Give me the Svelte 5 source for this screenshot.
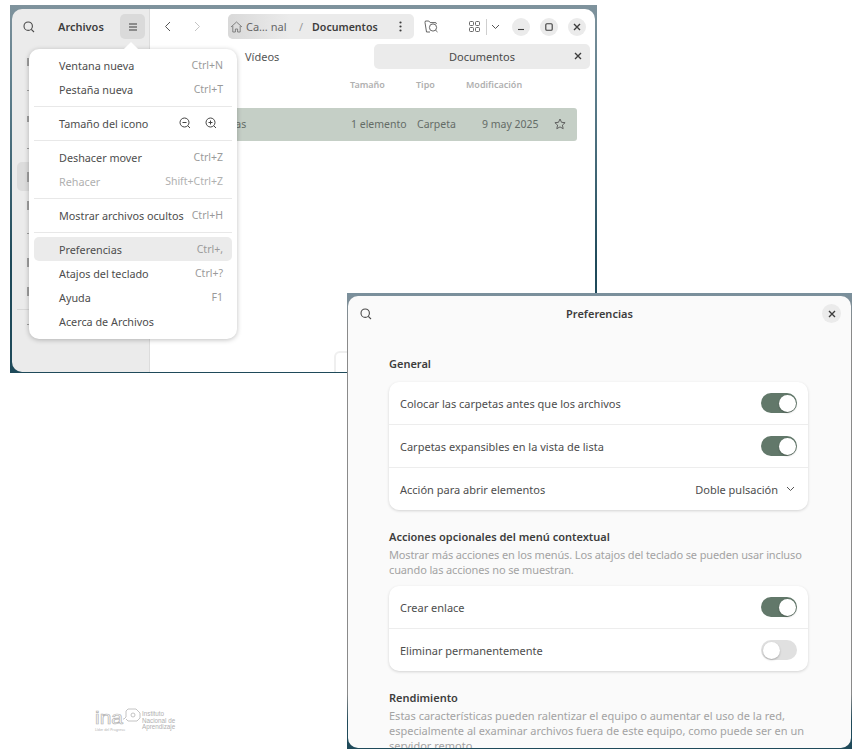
<script>
  const menu = [
    [
      { label: 'Ventana nueva', key: 'Ctrl+N' },
      { label: 'Pestaña nueva', key: 'Ctrl+T' }
    ],
    [{ label: 'Tamaño del icono', zoom: true }],
    [
      { label: 'Deshacer mover', key: 'Ctrl+Z' },
      { label: 'Rehacer', key: 'Shift+Ctrl+Z', off: true }
    ],
    [{ label: 'Mostrar archivos ocultos', key: 'Ctrl+H' }],
    [
      { label: 'Preferencias', key: 'Ctrl+,', hover: true },
      { label: 'Atajos del teclado', key: 'Ctrl+?' },
      { label: 'Ayuda', key: 'F1' },
      { label: 'Acerca de Archivos' }
    ]
  ]

  const general = [
    { label: 'Colocar las carpetas antes que los archivos', on: true },
    { label: 'Carpetas expansibles en la vista de lista', on: true },
    { label: 'Acción para abrir elementos', value: 'Doble pulsación' }
  ]

  const context = [
    { label: 'Crear enlace', on: true },
    { label: 'Eliminar permanentemente', on: false }
  ]

  // sidebar icons only peek out a couple of pixels from under the menu
  const places = [8, 1, 6, 1, 10, 9, 1, 9, 9]
</script>

{#snippet search()}
  <svg width="12" height="12" viewBox="0 0 12 12" fill="none" stroke="#4a4a4a" stroke-width="1.1">
    <circle cx="5.2" cy="5.2" r="4.2" />
    <path d="M8.3 8.3 11 11" />
  </svg>
{/snippet}

{#snippet cross()}
  <svg width="8" height="8" viewBox="0 0 8 8" fill="none" stroke="#3d3d3d" stroke-width="1.4">
    <path d="M1 1 7 7M7 1 1 7" />
  </svg>
{/snippet}

{#snippet rows(list, cls)}
  <div class="card {cls}">
    {#each list as row}
      <div class="card-row">
        <span>{row.label}</span>
        {#if row.value}
          <span class="value">
            {row.value}
            <svg width="9" height="6" viewBox="0 0 9 6" fill="none" stroke="#555" stroke-width="1">
              <path d="M1 1 4.5 4.5 8 1" />
            </svg>
          </span>
        {:else}
          <span class="switch" class:on={row.on}><i></i></span>
        {/if}
      </div>
    {/each}
  </div>
{/snippet}

<div class="desktop">
  <section class="win files">
    <aside class="sidebar">
      <div class="side-head">
        <span class="side-search">{@render search()}</span>
        <strong>Archivos</strong>
        <span class="burger">
          <svg width="10" height="8" viewBox="0 0 10 8" fill="none" stroke="#3d3d3d" stroke-width="1.2">
            <path d="M1 1h8M1 4h8M1 7h8" />
          </svg>
        </span>
      </div>
      <div class="places">
        {#each places as h, i}
          <div class="place" class:active={i === 4}>
            <span class="place-icon" style="height: {h}px"></span>
          </div>
        {/each}
        <hr />
        <div class="place"><span class="place-icon" style="height: 1px"></span></div>
      </div>
    </aside>

    <div class="content">
      <header class="toolbar">
        <svg class="nav" width="7" height="11" viewBox="0 0 7 11" fill="none" stroke="#555" stroke-width="1">
          <path d="M6 1 1.5 5.5 6 10" />
        </svg>
        <svg class="nav next" width="7" height="11" viewBox="0 0 7 11" fill="none" stroke="#c4c4c4" stroke-width="1">
          <path d="M1 1 5.5 5.5 1 10" />
        </svg>
        <div class="path">
          <span class="crumb-home">
            <svg width="13" height="12" viewBox="0 0 13 12" fill="none" stroke="#777" stroke-width="0.9">
              <path d="M1 6 6.5 1 12 6M2.8 5v6h2.6V8h2.2v3h2.6V5" />
            </svg>
            Ca… nal
          </span>
          <span class="slash">/</span>
          <strong>Documentos</strong>
          <svg class="dots" width="3" height="11" viewBox="0 0 3 11" fill="#3d3d3d">
            <circle cx="1.5" cy="1.5" r="1.1" />
            <circle cx="1.5" cy="5.5" r="1.1" />
            <circle cx="1.5" cy="9.5" r="1.1" />
          </svg>
        </div>
        <svg class="folder-find" width="15" height="13" viewBox="0 0 15 13" fill="none" stroke="#555" stroke-width="0.9">
          <path d="M6 12H2.5L1 2.5 1.4 1h3.4l1.4 1.6h5.6l.7 1.4" />
          <circle cx="9" cy="7.5" r="3.6" />
          <path d="M11.6 10.2 13.5 12" />
        </svg>
        <svg class="grid-icon" width="11" height="11" viewBox="0 0 11 11" fill="none" stroke="#555" stroke-width="0.9">
          <rect x="0.5" y="0.5" width="4" height="4" rx="1" />
          <rect x="6.5" y="0.5" width="4" height="4" rx="1" />
          <rect x="0.5" y="6.5" width="4" height="4" rx="1" />
          <rect x="6.5" y="6.5" width="4" height="4" rx="1" />
        </svg>
        <span class="sep"></span>
        <svg class="drop" width="9" height="6" viewBox="0 0 9 6" fill="none" stroke="#555" stroke-width="1">
          <path d="M1 1 4.5 4.5 8 1" />
        </svg>
        <div class="controls">
          <span class="ctl">
            <svg width="8" height="8" viewBox="0 0 8 8" fill="none" stroke="#3d3d3d" stroke-width="1.1"><path d="M1 6.5h6" /></svg>
          </span>
          <span class="ctl">
            <svg width="8" height="8" viewBox="0 0 8 8" fill="none" stroke="#3d3d3d" stroke-width="1.1"><rect x="0.8" y="0.8" width="6.4" height="6.4" rx="1" /></svg>
          </span>
          <span class="ctl">{@render cross()}</span>
        </div>
      </header>

      <div class="tabs">
        <span class="tab-plain">Vídeos</span>
        <span class="tab-active">
          Documentos
          <span class="tab-close">{@render cross()}</span>
        </span>
      </div>

      <div class="columns">
        <span class="c-size">Tamaño</span>
        <span class="c-type">Tipo</span>
        <span class="c-date">Modificación</span>
      </div>

      <div class="file-row">
        <span class="c-name">Plantillas</span>
        <span class="c-size">1 elemento</span>
        <span class="c-type">Carpeta</span>
        <span class="c-date">9 may 2025</span>
        <svg width="12" height="12" viewBox="0 0 12 12" fill="none" stroke="#555" stroke-width="0.9">
          <path d="M6 1l1.5 3.3 3.6.4-2.7 2.4.8 3.6L6 8.9l-3.2 1.8.8-3.6L.9 4.7l3.6-.4z" />
        </svg>
      </div>
    </div>

    <div class="floating"></div>

    <nav class="menu">
      {#each menu as group, g}
        {#if g > 0}<hr />{/if}
        <div class="menu-group">
          {#each group as item}
            <div class="menu-item" class:off={item.off} class:hover={item.hover}>
              <span>{item.label}</span>
              {#if item.key}<span class="key">{item.key}</span>{/if}
              {#if item.zoom}
                <span class="zooms">
                  <svg width="12" height="12" viewBox="0 0 12 12" fill="none" stroke="#444" stroke-width="1">
                    <circle cx="5.5" cy="5.5" r="4.5" /><path d="M3.5 5.5h4M8.8 8.8 11 11" />
                  </svg>
                  <svg width="12" height="12" viewBox="0 0 12 12" fill="none" stroke="#444" stroke-width="1">
                    <circle cx="5.5" cy="5.5" r="4.5" /><path d="M3.5 5.5h4M5.5 3.5v4M8.8 8.8 11 11" />
                  </svg>
                </span>
              {/if}
            </div>
          {/each}
        </div>
      {/each}
    </nav>
  </section>

  <section class="win prefs">
    <div class="prefs-inner">
      <header class="prefs-head">
        <span class="prefs-search">{@render search()}</span>
        <strong>Preferencias</strong>
        <span class="prefs-close">{@render cross()}</span>
      </header>
      <div class="prefs-body">
        <h2>General</h2>
        {@render rows(general, '')}

        <h2 class="second">Acciones opcionales del menú contextual</h2>
        <p class="tight">Mostrar más acciones en los menús. Los atajos del teclado se pueden usar incluso cuando las acciones no se muestran.</p>
        {@render rows(context, 'close')}

        <h2 class="third">Rendimiento</h2>
        <p>Estas características pueden ralentizar el equipo o aumentar el uso de la red, especialmente al examinar archivos fuera de este equipo, como puede ser en un servidor remoto.</p>
      </div>
    </div>
  </section>

  <div class="logo">
    <svg width="47" height="20" viewBox="0 0 47 20" fill="none" stroke="#b5b5b5" stroke-width="0.8">
      <text x="1" y="17" font-family="Liberation Sans" font-size="19" textLength="28" lengthAdjust="spacingAndGlyphs" fill="#fff" stroke-width="0.7">ina</text>
      <path d="M29 12h1l2-2V4l2-2h8l4 4v5l-3 3H34l-2-2" />
      <circle cx="39" cy="8" r="2" />
    </svg>
    <span class="logo-sub">Líder del Progreso</span>
    <span class="logo-name">Instituto<br />Nacional de<br />Aprendizaje</span>
  </div>
</div>

<style>
  :global(body) {
    background: #fff;
    font-family: "Noto Sans", "Open Sans", sans-serif;
  }

  .desktop {
    position: relative;
    width: 859px;
    height: 754px;
    overflow: hidden;
    color: #3d3d3d;
    font-size: 11px;
  }

  .win {
    position: absolute;
    box-sizing: border-box;
  }

  .files {
    left: 10px;
    top: 5px;
    width: 587px;
    height: 368px;
    display: flex;
    padding: 4px 2px 1px;
    background: linear-gradient(to bottom, #7f939d, #5b7c8a 25%, #1f4a5a 70%);
  }

  .sidebar {
    width: 138px;
    box-sizing: border-box;
    flex: none;
    background: #ebebeb;
    border-right: 1px solid #dcdcdc;
    border-radius: 10px 0 0 10px;
  }

  .side-head {
    height: 35px;
    display: flex;
    align-items: center;
    padding-left: 11px;
  }

  .side-search {
    display: flex;
    margin-right: 23px;
  }

  .side-head strong {
    font-size: 11px;
    font-weight: 600;
    width: 62px;
  }

  .burger {
    width: 25px;
    height: 25px;
    background: #dadada;
    border-radius: 5px;
    display: flex;
    align-items: center;
    justify-content: center;
  }

  .places {
    padding: 4px 0 0 5px;
  }

  .place {
    height: 28.6px;
    display: flex;
    align-items: center;
    padding-left: 10px;
    border-radius: 5px;
  }

  .place.active {
    background: #dcdcdc;
  }

  .place-icon {
    width: 2px;
    background: #a0a0a0;
  }

  .places hr {
    border: 0;
    border-top: 1px solid #d8d8d8;
    margin: 4px 0 0;
  }

  .content {
    flex: 1;
    min-width: 0;
    display: flex;
    flex-direction: column;
    background: #fff;
    border-radius: 0 10px 0 0;
  }

  .toolbar {
    height: 35px;
    flex: none;
    display: flex;
    align-items: center;
    padding-left: 14px;
  }

  .next {
    margin-left: 23px;
  }

  .path {
    margin-left: 27px;
    width: 186px;
    height: 25px;
    flex: none;
    display: flex;
    align-items: center;
    background: #ebebeb;
    border-radius: 5px;
    font-size: 11px;
    color: #666;
  }

  .crumb-home {
    height: 100%;
    display: flex;
    align-items: center;
    gap: 3px;
    padding-left: 2px;
    width: 59px;
    flex: none;
    background: linear-gradient(to right, #d9d9d9, #ebebeb);
    border-radius: 5px 0 0 5px;
    white-space: nowrap;
  }

  .slash {
    margin: 0 9px 0 10px;
    color: #999;
  }

  .path strong {
    color: #3d3d3d;
    font-weight: 600;
    font-size: 10.6px;
  }

  .dots {
    margin-left: 21px;
  }

  .folder-find {
    margin-left: 10px;
  }

  .grid-icon {
    margin-left: 30px;
  }

  .sep {
    width: 1px;
    height: 16px;
    background: #cfcfcf;
    margin: 0 4px 0 6px;
  }

  .controls {
    display: flex;
    gap: 10px;
    margin-left: 12px;
  }

  .ctl {
    width: 18px;
    height: 18px;
    border-radius: 50%;
    background: #ebebeb;
    display: flex;
    align-items: center;
    justify-content: center;
  }

  .tabs {
    height: 25px;
    flex: none;
    display: flex;
    align-items: center;
    padding-right: 5px;
  }

  .tab-plain {
    margin-left: 95px;
    flex: 1;
    color: #555;
  }

  .tab-active {
    position: relative;
    width: 216px;
    height: 25px;
    background: #ebebeb;
    border-radius: 5px;
    display: flex;
    align-items: center;
    justify-content: center;
    color: #4a4a4a;
  }

  .tab-close {
    position: absolute;
    right: 8px;
    top: 8px;
    display: flex;
  }

  .columns,
  .file-row {
    display: flex;
    align-items: center;
    flex: none;
  }

  .columns {
    height: 30px;
    font-size: 9px;
    font-weight: 600;
    color: #b0b0b0;
    padding-left: 200px;
  }

  .c-size {
    width: 66px;
  }

  .c-type {
    width: 50px;
  }

  .file-row {
    margin: 9px 18px 0 0;
    height: 33px;
    box-sizing: border-box;
    background: #c5cfc6;
    border-radius: 3px;
    padding: 0 0 1px 52px;
    font-size: 10.5px;
    color: #646c66;
  }

  .c-name {
    width: 149px;
  }

  .file-row .c-type {
    width: 65px;
  }

  .file-row .c-date {
    width: 72px;
  }

  .floating {
    position: absolute;
    left: 324px;
    top: 346px;
    width: 40px;
    height: 30px;
    box-sizing: border-box;
    border: 2px solid #efefef;
    border-bottom: 0;
    border-radius: 6px 6px 0 0;
    clip-path: inset(0 0 9px 0);
  }

  .menu {
    position: absolute;
    left: 19px;
    top: 44px;
    width: 208px;
    box-sizing: border-box;
    padding: 4px 5px 6px;
    background: #fff;
    border-radius: 10px;
    box-shadow: 0 1px 5px rgba(0, 0, 0, 0.25);
    font-size: 10.8px;
  }

  .menu::before {
    content: "";
    position: absolute;
    left: 97px;
    top: -5px;
    width: 10px;
    height: 10px;
    background: #fff;
    transform: rotate(45deg);
  }

  .menu hr {
    border: 0;
    border-top: 1px solid #e8e8e8;
    margin: 4.5px 0;
  }

  .menu-item {
    position: relative;
    height: 24px;
    display: flex;
    align-items: center;
    justify-content: space-between;
    padding: 0 9px 0 25px;
    border-radius: 5px;
    color: #4d4d4d;
    white-space: nowrap;
  }

  .menu-item.off,
  .menu-item.off .key {
    color: #b0b0b0;
  }

  .menu-item.hover {
    background: #ebebeb;
  }

  .key {
    font-size: 10.5px;
    color: #9a9a9a;
  }

  .zooms {
    display: flex;
    gap: 14px;
    margin-right: 6px;
  }

  .prefs {
    left: 347px;
    top: 293px;
    width: 505px;
    height: 456px;
    padding: 3px 1px 1px;
    background: linear-gradient(to bottom, #7a909c, #8a8a8a 8%, #8a8a8a 88%, #1f4a5a 94%);
  }

  .prefs-inner {
    height: 100%;
    background: #fafafa;
    border-radius: 10px;
    overflow: hidden;
  }

  .prefs-head {
    position: relative;
    height: 35px;
    display: flex;
    align-items: center;
    justify-content: center;
  }

  .prefs-search {
    position: absolute;
    left: 12px;
    top: 12px;
    display: flex;
  }

  .prefs-head strong {
    font-weight: 600;
    font-size: 11px;
  }

  .prefs-close {
    position: absolute;
    right: 10px;
    top: 8px;
    width: 19px;
    height: 19px;
    border-radius: 50%;
    background: #ebebeb;
    display: flex;
    align-items: center;
    justify-content: center;
  }

  .prefs-body {
    padding: 25px 43px 0 41px;
  }

  h2 {
    margin: 0;
    font-size: 11px;
    font-weight: 600;
    line-height: 16px;
  }

  .second {
    margin-top: 19px;
  }

  .third {
    margin-top: 19px;
  }

  p {
    margin: 2px 0 0;
    font-size: 11px;
    line-height: 15px;
    color: #a3a3a3;
  }

  .tight {
    letter-spacing: -0.13px;
  }

  .card {
    margin-top: 10px;
    background: #fff;
    border-radius: 10px;
    box-shadow: 0 1px 3px rgba(0, 0, 0, 0.16);
  }

  .card.close {
    margin-top: 9px;
  }

  .card-row {
    height: 43px;
    box-sizing: border-box;
    display: flex;
    align-items: center;
    justify-content: space-between;
    padding: 0 11px;
    border-bottom: 1px solid #ededed;
    color: #4d4d4d;
  }

  .card-row:last-child {
    height: 42px;
    border-bottom: 0;
  }

  .value {
    display: flex;
    align-items: center;
    gap: 8px;
    margin-right: 2px;
  }

  .switch {
    width: 36px;
    height: 20px;
    border-radius: 10px;
    background: #e0e0e0;
    display: flex;
    align-items: center;
    padding: 0 1.5px;
    box-sizing: border-box;
  }

  .switch.on {
    background: #62786a;
    justify-content: flex-end;
  }

  .switch i {
    width: 17px;
    height: 17px;
    border-radius: 50%;
    background: #fff;
    box-shadow: 0 1px 2px rgba(0, 0, 0, 0.25);
  }

  .logo {
    position: absolute;
    left: 94px;
    top: 707px;
    width: 90px;
    height: 27px;
    color: #b0b0b0;
  }

  .logo svg {
    display: block;
    overflow: visible;
  }

  .logo-sub {
    position: absolute;
    left: 1px;
    top: 20px;
    font-size: 3.5px;
    white-space: nowrap;
  }

  .logo-name {
    position: absolute;
    left: 48px;
    top: 4px;
    font-family: "Liberation Sans", sans-serif;
    font-size: 6.3px;
    line-height: 6.5px;
    white-space: nowrap;
  }
</style>
